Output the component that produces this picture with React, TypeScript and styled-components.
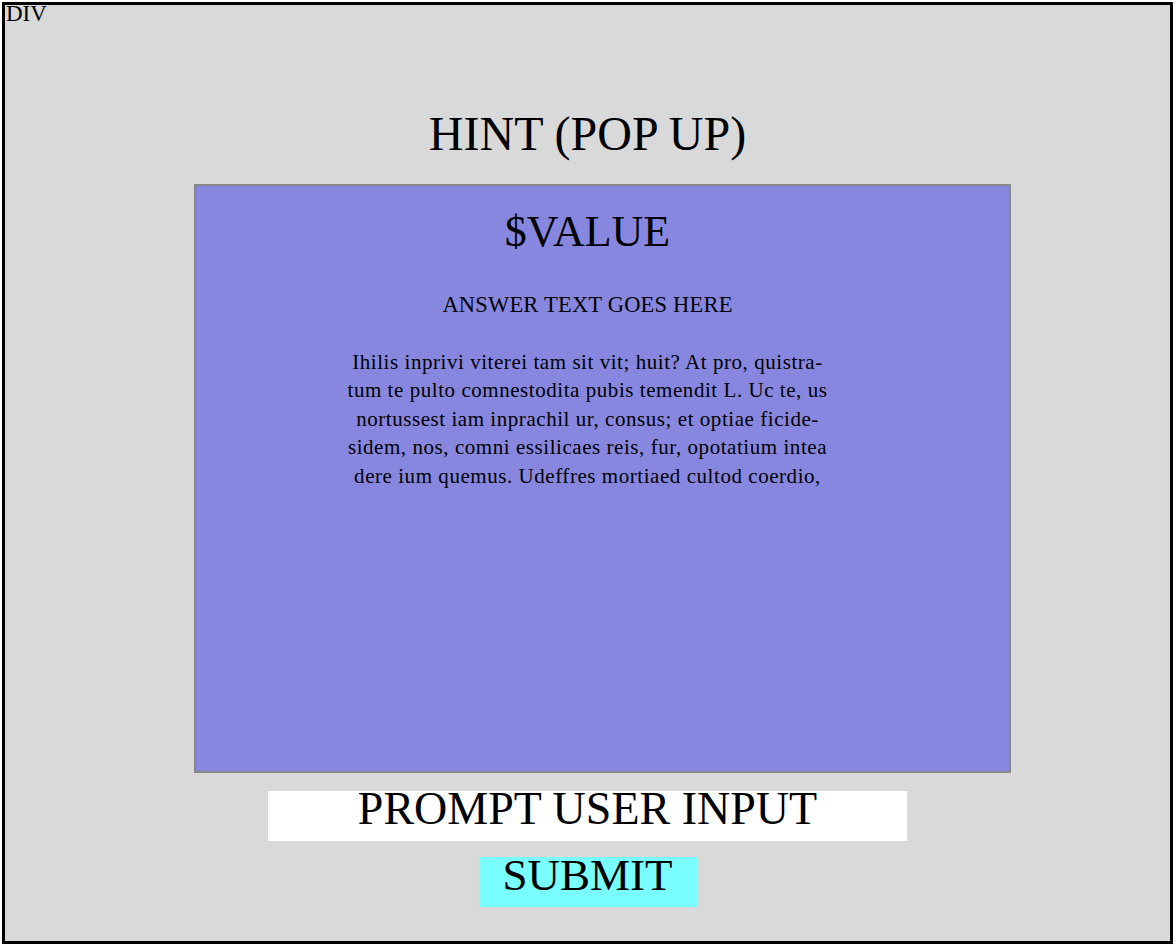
import styled, { createGlobalStyle } from "styled-components";

const GlobalStyle = createGlobalStyle`
    html, body {
        margin: 0;
        padding: 0;
        background: #ffffff;
    }
    body {
        font-family: "Liberation Serif", "Times New Roman", serif;
        color: #000;
    }
`;

const Frame = styled.div`
    box-sizing: border-box;
    width: 1171px;
    height: 942px;
    margin: 2px;
    border: 3px solid #000;
    background-color: #d9d9d9;
    display: flex;
    flex-direction: column;
    align-items: center;
`;

const Label = styled.div`
    align-self: flex-start;
    font-size: 23px;
    line-height: 17px;
    padding-left: 1px;
`;

const Title = styled.h1`
    margin: 88px 0 0;
    font-size: 48px;
    font-weight: 400;
    line-height: 1;
`;

const Popup = styled.div`
    box-sizing: border-box;
    width: 817px;
    height: 589px;
    margin-top: 26px;
    margin-left: 30px;
    padding: 24px 30px 0 0;
    border: 2px solid #888;
    background-color: #8787e0;
    display: flex;
    flex-direction: column;
    align-items: center;
    text-align: center;
`;

const Value = styled.div`
    font-size: 44px;
    line-height: 1;
`;

const Answer = styled.div`
    margin-top: 40px;
    font-size: 22.5px;
    line-height: 1;
    letter-spacing: 0.2px;
`;

const Body = styled.p`
    margin: 31px 0 0;
    font-size: 21px;
    line-height: 28.5px;
    letter-spacing: 0.55px;
`;

const Field = styled.div`
    box-sizing: border-box;
    width: 639px;
    height: 50px;
    margin-top: 18px;
    background-color: #fff;
    font-size: 46px;
    line-height: 35px;
    text-align: center;
`;

const Submit = styled.button`
    box-sizing: border-box;
    width: 218px;
    height: 50px;
    margin-top: 16px;
    padding: 0;
    border: none;
    background-color: #79fefe;
    font-family: inherit;
    color: #000;
    font-size: 45px;
    line-height: 36px;
    display: flex;
    justify-content: center;
    align-items: flex-start;
    cursor: pointer;
`;

const lines = [
    "Ihilis inprivi viterei tam sit vit; huit? At pro, quistra-",
    "tum te pulto comnestodita pubis temendit L. Uc te, us",
    "nortussest iam inprachil ur, consus; et optiae ficide-",
    "sidem, nos, comni essilicaes reis, fur, opotatium intea",
    "dere ium quemus. Udeffres mortiaed cultod coerdio,",
];

export default function App() {
    return (
        <>
            <GlobalStyle />
            <Frame>
                <Label>DIV</Label>
                <Title>HINT (POP UP)</Title>
                <Popup>
                    <Value>$VALUE</Value>
                    <Answer>ANSWER TEXT GOES HERE</Answer>
                    <Body>
                        {lines.map((l, i) => (
                            <span key={i}>
                                {l}
                                {i < lines.length - 1 && <br />}
                            </span>
                        ))}
                    </Body>
                </Popup>
                <Field>PROMPT USER INPUT</Field>
                <Submit>SUBMIT</Submit>
            </Frame>
        </>
    );
}
